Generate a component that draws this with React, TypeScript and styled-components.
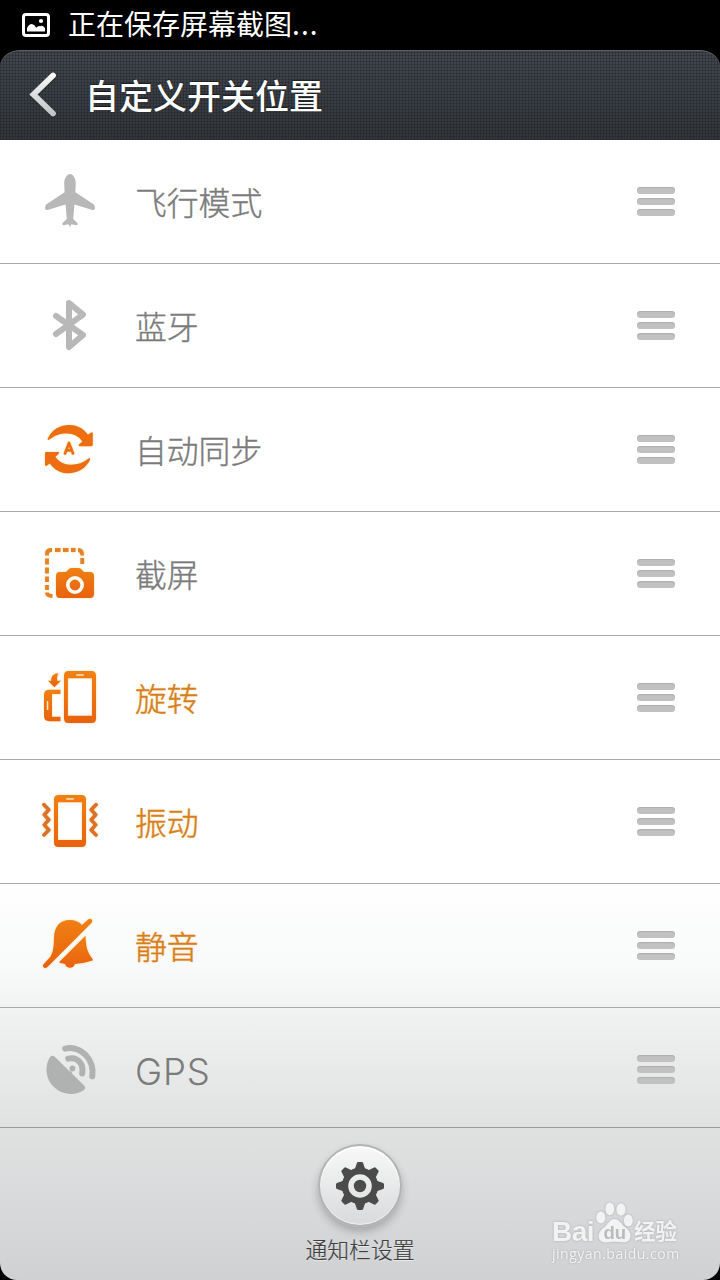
import React from 'react'
import styled, { createGlobalStyle } from 'styled-components'

const GlobalStyle = createGlobalStyle`
  * {
    box-sizing: border-box;
  }

  body {
    margin: 0;
    background: #000;
    font-family: 'Noto Sans CJK SC', sans-serif;
  }
`;

const Screen = styled.div`
  position: relative;
  display: flex;
  flex-direction: column;
  width: 720px;
  height: 1280px;
  background: #000;
  overflow: hidden;
`;

const StatusBar = styled.div`
  display: flex;
  align-items: center;
  height: 50px;
  padding-left: 22px;
  gap: 18px;
  color: #fff;
`;

const StatusText = styled.span`
  height: 50px;
  font-size: 28px;
  line-height: 47px;
  white-space: nowrap;
`;

const Dots = styled.span`
  letter-spacing: 1.1px;
`;

const Header = styled.header`
  display: flex;
  align-items: center;
  flex: none;
  height: 90px;
  padding: 0 0 2px 26px;
  gap: 25px;
  border-radius: 20px 20px 0 0 / 16px 16px 0 0;
  box-shadow: inset 0 1px 0 #5d6065;
  background:
    repeating-linear-gradient(90deg, rgba(20, 24, 28, 0.3) 0 1px, transparent 1px 3px),
    repeating-linear-gradient(0deg, rgba(20, 24, 28, 0.3) 0 1px, transparent 1px 3px),
    linear-gradient(#43484f, #32363a);
`;

const Title = styled.h1`
  margin: 2px 0 0;
  color: #fff;
  font-size: 34px;
  font-weight: 500;
  line-height: 50px;
  text-shadow: 0 -1px 1px rgba(0, 0, 0, 0.5);
`;

const Content = styled.main`
  display: flex;
  flex-direction: column;
  height: 1140px;
  border-radius: 0 0 17px 17px;
  background: linear-gradient(#fff 0 740px, #f8f9f9 830px, #f1f3f2 868px, #e0e2e1 987px, #d9dbdc 1050px, #cfd1d2 1140px);
`;

const List = styled.ul`
  flex: none;
  height: 988px;
  margin: 0;
  padding: 0;
  overflow: hidden;
  list-style: none;
  border-bottom: 1px solid #9a9c9b;
`;

const Row = styled.li`
  display: flex;
  align-items: center;
  height: 124px;
  padding: 0 45px 0 40px;
  border-bottom: 1px solid #a9aaaa;
`;

const RowIcon = styled.svg<{ $on?: boolean }>`
  flex: none;
  width: 60px;
  height: 64px;
  filter: ${p => (p.$on ? 'drop-shadow(0 0 1px #ffdc9c)' : 'none')};
`;

const RowLabel = styled.span<{ $active?: boolean }>`
  flex: 1;
  margin: 0 0 1px 35px;
  color: ${p => (p.$active ? '#d67e1c' : '#7b7b7b')};
  font-size: 31.8px;
  font-weight: 300;
  line-height: 48px;
  -webkit-text-stroke: 0.4px currentColor;
  text-shadow: ${p => (p.$active ? '0 0 3px #ffe3b0' : 'none')};
`;

const LatinLabel = styled.span`
  position: relative;
  top: 2px;
  font-family: Inter, sans-serif;
  font-size: 36.5px;
  font-weight: 300;
  letter-spacing: 0.9px;
  -webkit-text-stroke: 0;
`;

const Handle = styled.div`
  display: flex;
  flex-direction: column;
  gap: 4px;
  width: 38px;
`;

const HandleBar = styled.span`
  height: 7px;
  border-radius: 4px;
  background: #c1c1c1;
  box-shadow: inset 0 1px 1px #adadad;
`;

const Footer = styled.footer`
  display: flex;
  flex-direction: column;
  align-items: center;
  padding-top: 16px;
`;

const RoundButton = styled.button`
  display: flex;
  align-items: center;
  justify-content: center;
  width: 84px;
  height: 83px;
  padding: 1px 0 0;
  border: 2px solid #b1b3b5;
  border-radius: 50%;
  background: linear-gradient(#f8f8f8, #d8dadb);
  box-shadow:
    inset 0 2px 1px #fff,
    inset 0 -1px 1px #f2f2f2,
    0 5px 8px rgba(0, 0, 0, 0.22);
`;

const FooterLabel = styled.span`
  margin-top: 6px;
  color: #3d3d3d;
  font-size: 21.8px;
  font-weight: 300;
  line-height: 32px;
  -webkit-text-stroke: 0.2px currentColor;
  text-shadow: 0 1px 0 #e8e8e8;
`;

const Watermark = styled.div`
  position: absolute;
  left: 552px;
  top: 1200px;
  width: 130px;
  color: #f2f3f3;
  filter: drop-shadow(0 0 1px #a9abac);
`;

const WatermarkLogo = styled.div`
  display: flex;
  align-items: flex-end;
  height: 44px;
`;

const Brand = styled.span`
  width: 44px;
  font-family: 'Liberation Sans', sans-serif;
  font-size: 28px;
  font-weight: 700;
  line-height: 25px;
  letter-spacing: -0.5px;
`;

const BrandCn = styled.span`
  margin: 0 0 3px 1px;
  font-size: 21.5px;
  font-weight: 700;
  line-height: 23px;
`;

const WatermarkUrl = styled.div`
  padding-top: 1px;
  font-family: 'Open Sans', sans-serif;
  font-size: 14px;
  line-height: 18px;
  letter-spacing: 0.5px;
`;

const GREY = '#b8b8b8'
const ORANGE = 'url(#orange)'

const PlaneIcon = () => (
  <RowIcon viewBox="0 0 60 64" fill={GREY}>
    <path d="M30 4C33.5 4 35.8 9.5 35.8 13L35.4 22.3L53.5 34.2Q55 35.4 55 38Q55 40.6 52.5 40L34.4 34.4L33.2 49L37.6 53.2Q37.8 55 36.6 55.2L31.5 54.3L30 57L28.5 54.3L23.4 55.2Q22.2 55 22.4 53.2L26.8 49L25.6 34.4L7.5 40Q5 40.6 5 38Q5 35.4 6.5 34.2L24.6 22.3L24.2 13C24.2 9.5 26.5 4 30 4Z" />
  </RowIcon>
)

const BluetoothIcon = () => (
  <RowIcon viewBox="0 0 60 64" fill="none" stroke={GREY} strokeWidth="6" strokeLinecap="round" strokeLinejoin="round">
    <path d="M16 22L43 41L29 53V9L43 20.6L16 40" />
  </RowIcon>
)

const SyncIcon = () => (
  <RowIcon $on viewBox="0 0 60 64" fill="#ec6d12">
    <path id="syncArrow" d="M7.8 20.4C12 11.5 20 7 29.5 7C37 7 43.3 10.3 48 16.8L51.2 14.4Q52.8 13.6 52.8 15.6V26.8Q52.8 28.2 51.2 28.2H39.8Q37.8 27.8 39.2 26.2L42.4 23.4C39 18.3 33.5 15.4 27 15.4C20 15.4 14.5 17.3 9.4 21.6Q7 22.6 7.8 20.4Z" />
    <use href="#syncArrow" transform="rotate(180 28.9 31.1)" />
    <path d="M25 35.4L29 25L33 35.4M26 32.4H32" fill="none" stroke="#ec6d12" strokeWidth="2.7" strokeLinejoin="round" strokeLinecap="round" />
  </RowIcon>
)

const CaptureIcon = () => (
  <RowIcon $on viewBox="0 0 60 64" fill={ORANGE}>
    <g fill="none" stroke="#e2822b" strokeWidth="3.8">
      <path d="M7 13.5V11.5Q7 8 12 8M38 8Q42.2 8 42.2 13.5" />
      <path d="M15 8H20.5M23 8H28.5M31 8H35.6M7 16.5V22.5M7 25.5V31.5M7 34.5V40M7 43V48M42.2 16V22" />
      <path d="M7 50.5Q7 54 12.5 54" />
    </g>
    <path d="M20 30H26L29 27Q30 26 31.5 26H38.5Q40 26 41 27L44 30H50Q54 30 54 34V51.5Q54 56 50 56H20Q16 56 16 51.5V34Q16 30 20 30Z" />
    <circle cx="35" cy="43" r="7.2" fill="none" stroke="#fffdf8" strokeWidth="3.6" />
  </RowIcon>
)

const RotateIcon = () => (
  <RowIcon $on viewBox="0 0 60 64" fill={ORANGE}>
    <path fillRule="evenodd" d="M28.5 5H51.5Q56 5 56 9.5V52.5Q56 57 51.5 57H28.5Q24 57 24 52.5V9.5Q24 5 28.5 5ZM27.9 12.3V49.7H52V12.3ZM36.8 8.2Q36 8.2 36 9Q36 9.8 36.8 9.8H43.2Q44 9.8 44 9Q44 8.2 43.2 8.2Z" />
    <path fillRule="evenodd" d="M9.5 23.7H20.5V28H12V50.7H20.5V55.2H9.5Q4 55.2 4 50V29Q4 23.7 9.5 23.7ZM6.8 35V44H8.3V35Z" />
    <path d="M18.5 7.3C13.5 7.4 11.2 10 11.2 14.7H8L14.4 21.2L21 14.7H17.2C16.9 11.7 17.2 9.7 18.5 7.3Z" />
  </RowIcon>
)

const VibrateIcon = () => (
  <RowIcon $on viewBox="0 0 60 64" fill={ORANGE}>
    <path fillRule="evenodd" d="M18.5 5H41.5Q46 5 46 9.5V52.5Q46 57 41.5 57H18.5Q14 57 14 52.5V9.5Q14 5 18.5 5ZM18 12.3V50H42V12.3ZM26.8 8.2Q26 8.2 26 9Q26 9.8 26.8 9.8H33.2Q34 9.8 34 9Q34 8.2 33.2 8.2Z" />
    <path d="M4 14.7L8.8 19.7L4.3 24.7L8.8 29.7L4.3 34.9L8.8 40L4 45M56 14.7L51.2 19.7L55.7 24.7L51.2 29.7L55.7 34.9L51.2 40L56 45" fill="none" stroke="#dc7229" strokeWidth="3.7" strokeLinecap="round" strokeLinejoin="round" />
  </RowIcon>
)

const MuteIcon = () => (
  <RowIcon $on viewBox="0 0 60 64" fill={ORANGE}>
    <path d="M3.6 50.3L10.5 42.5C13.6 37 13.6 33 14 24C14.2 12 20.5 6 29.5 6C35 6 39 7.8 42 11L48.2 5.4Q50.2 4 51.6 5.6Q52.8 7.2 51.4 9L7.2 53.3Q5 54.7 3.5 53.2Q2.2 51.8 3.6 50.3Z" />
    <path d="M45.5 21.8C46 33 47 38 52.7 45.3V46.5Q44 49.4 34.8 50A5 5 0 0 1 25.1 50L19.5 48.7V47.8Z" />
  </RowIcon>
)

const GpsIcon = () => (
  <RowIcon viewBox="0 0 60 64" fill="#b0b1b1">
    <path d="M10 19Q12.5 16.7 15 19L29.5 33.2L31.7 33.4L31.9 35.6L44.4 47.8Q46.2 50 44 52A24.3 24.3 0 0 1 10 19Z" />
    <circle cx="32.4" cy="30.4" r="3" />
    <path d="M28.2 20.6Q36 18.8 40.3 24.8Q43.3 29 42.2 35.5M25.2 10.6Q36.5 8.2 45.7 17Q54 25.7 52.3 38.4" fill="none" stroke="#b0b1b1" strokeWidth="6" strokeLinecap="round" />
  </RowIcon>
)

const rows = [
  { label: '飞行模式', icon: <PlaneIcon /> },
  { label: '蓝牙', icon: <BluetoothIcon /> },
  { label: '自动同步', icon: <SyncIcon /> },
  { label: '截屏', icon: <CaptureIcon /> },
  { label: '旋转', icon: <RotateIcon />, active: true },
  { label: '振动', icon: <VibrateIcon />, active: true },
  { label: '静音', icon: <MuteIcon />, active: true },
  { label: 'GPS', icon: <GpsIcon />, latin: true },
]

const HiddenDefs = styled.svg`
  position: absolute;
`;

const App = () => {
  return (
    <Screen>
      <GlobalStyle />
      <HiddenDefs width="0" height="0">
        <defs>
          <linearGradient id="orange" x1="0" y1="0" x2="0" y2="1">
            <stop offset="0" stopColor="#f08014" />
            <stop offset="1" stopColor="#e8620f" />
          </linearGradient>
          <linearGradient id="silver" x1="0" y1="0" x2="0" y2="1">
            <stop offset="0" stopColor="#f8f8f8" />
            <stop offset="1" stopColor="#c2c4c6" />
          </linearGradient>
        </defs>
      </HiddenDefs>

      <StatusBar>
        <svg width="28" height="24" viewBox="0 0 28 24">
          <rect x="1.5" y="1.5" width="25" height="21" rx="2.5" fill="none" stroke="#fff" strokeWidth="3" />
          <path d="M5 18.5V15Q7.5 10.5 10.5 11.2Q12.5 11.6 14.2 14.8Q16 12.6 18 13.2Q20.5 12 23 15V18.5Z" fill="#fff" />
          <circle cx="19" cy="8" r="2.1" fill="#fff" />
        </svg>
        <StatusText>正在保存屏幕截图<Dots>...</Dots></StatusText>
      </StatusBar>

      <Header>
        <svg width="34" height="50" viewBox="0 0 34 50">
          <path d="M27 6.5L7.5 25.5L27 44" fill="none" stroke="#202427" strokeWidth="5.5" strokeLinecap="round" opacity="0.5" transform="translate(0 2)" />
          <path d="M27 6.5L7.5 25.5L27 44.5" fill="none" stroke="url(#silver)" strokeWidth="5.8" strokeLinecap="round" />
        </svg>
        <Title>自定义开关位置</Title>
      </Header>

      <Content>
        <List>
          {rows.map(row => (
            <Row key={row.label}>
              {row.icon}
              <RowLabel $active={row.active}>
                {row.latin ? <LatinLabel>{row.label}</LatinLabel> : row.label}
              </RowLabel>
              <Handle>
                <HandleBar />
                <HandleBar />
                <HandleBar />
              </Handle>
            </Row>
          ))}
        </List>

        <Footer>
          <RoundButton>
            <svg width="50" height="50" viewBox="-25 -25 50 50" fill="#4b4b4b">
              {[0, 45, 90, 135, 180, 225, 270, 315].map(a => (
                <path key={a} d="M-5.5 -16L-3.1 -23Q-2.8 -24 -1.8 -24H1.8Q2.8 -24 3.1 -23L5.5 -16Z" transform={`rotate(${a})`} />
              ))}
              <circle r="15" fill="none" stroke="#4b4b4b" strokeWidth="6.4" />
              <circle r="6.2" />
            </svg>
          </RoundButton>
          <FooterLabel>通知栏设置</FooterLabel>
        </Footer>
      </Content>

      <Watermark>
        <WatermarkLogo>
          <Brand>Bai</Brand>
          <svg width="37" height="42" viewBox="0 0 37 42" fill="#f2f3f3">
            <ellipse cx="4.8" cy="15.5" rx="4.6" ry="6" />
            <ellipse cx="13.8" cy="6.8" rx="4.5" ry="6.4" />
            <ellipse cx="25" cy="7.5" rx="4.6" ry="6.2" />
            <ellipse cx="32.3" cy="18.5" rx="4.5" ry="6" />
            <path d="M18.5 17C23 17 25 22 29.5 25.5C34 29 36 33 33.5 37.5C30.5 42 24 39.8 18.5 39.8S7 42 3.8 38C1 33.5 3.5 29 8 25.5C12 22 14 17 18.5 17Z" />
            <text x="18.8" y="37" textAnchor="middle" fontFamily="Liberation Sans, sans-serif" fontSize="18.5" fontWeight="700" fill="#b9bbbc">du</text>
          </svg>
          <BrandCn>经验</BrandCn>
        </WatermarkLogo>
        <WatermarkUrl>jingyan.baidu.com</WatermarkUrl>
      </Watermark>
    </Screen>
  )
}

export default App
